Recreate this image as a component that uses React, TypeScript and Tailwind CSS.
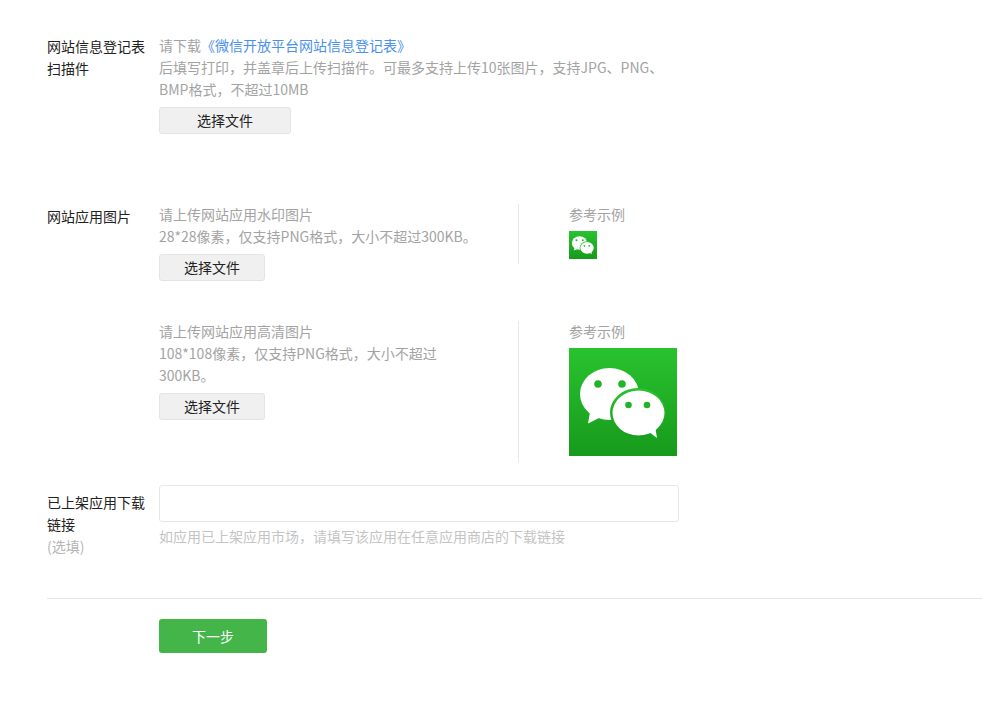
import React from 'react';

const FONT = "font-['Microsoft_YaHei','Noto_Sans_CJK_SC','Liberation_Sans',sans-serif]";

const WeChatIcon: React.FC<{ size: number; id: string }> = ({ size, id }) => (
  <svg width={size} height={size} viewBox="0 0 108 108" className="block">
    <defs>
      <linearGradient id={id} x1="0" y1="0" x2="0" y2="1">
        <stop offset="0" stopColor="#29c32f" />
        <stop offset="1" stopColor="#179a1c" />
      </linearGradient>
    </defs>
    <rect width="108" height="108" fill={`url(#${id})`} />
    <ellipse cx="40.5" cy="46" rx="29.5" ry="26" fill="#fff" />
    <path d="M21 64 L19 75.5 L34 68 Z" fill="#fff" />
    <ellipse cx="69" cy="64.5" rx="28" ry="24.5" fill={`url(#${id})`} />
    <ellipse cx="69.5" cy="65" rx="26" ry="22.5" fill="#fff" />
    <path d="M80 84 L88 90 L86 78 Z" fill="#fff" />
    <circle cx="29" cy="36" r="3.8" fill="#22b428" />
    <circle cx="53" cy="36" r="3.8" fill="#22b428" />
    <circle cx="59.5" cy="57" r="3.3" fill="#22b428" />
    <circle cx="78" cy="57" r="3.3" fill="#22b428" />
  </svg>
);

const FileButton: React.FC<{ wide?: boolean }> = ({ wide }) => (
  <button
    className={`${wide ? 'w-[132px]' : 'w-[106px]'} h-[27px] mt-[7px] block bg-[#f0f0f0] border border-[#e4e4e4] rounded-[3px] text-[14px] leading-[25px] text-[#222]`}
  >
    选择文件
  </button>
);

const ImageRow: React.FC<{ lines: string; iconSize: number; id: string; height: string }> = ({
  lines,
  iconSize,
  id,
  height,
}) => (
  <div className="flex">
    <div className="w-[359px]">
      <p className="w-[320px] -mt-px text-[#a3a3a3]">请上传网站应用{iconSize > 50 ? '高清' : '水印'}图片</p>
      <p className="w-[320px] text-[#a3a3a3]">{lines}</p>
      <FileButton />
    </div>
    <div className={`${height} border-l border-[#e7e7e7] pl-[50px]`}>
      <p className="-mt-px text-[#a3a3a3]">参考示例</p>
      <div className="mt-[6px]">
        <WeChatIcon size={iconSize} id={id} />
      </div>
    </div>
  </div>
);

export default function App() {
  return (
    <div className={`${FONT} w-[982px] h-[705px] overflow-hidden bg-white pl-[47px] pt-[35px] text-[14px] leading-[22px]`}>
      <div className="flex">
        <div className="w-[112px] shrink-0 pr-[12px] text-[#222]">网站信息登记表扫描件</div>
        <div className="w-[520px]">
          <p className="-mt-px text-[#a3a3a3]">
            请下载<a className="text-[#4a90ee]">《微信开放平台网站信息登记表》</a>
          </p>
          <p className="text-[#a3a3a3]">后填写打印，并盖章后上传扫描件。可最多支持上传10张图片，支持JPG、PNG、BMP格式，不超过10MB</p>
          <FileButton wide />
        </div>
      </div>

      <div className="flex mt-[70px]">
        <div className="w-[112px] shrink-0 text-[#222] pt-[1px]">网站应用图片</div>
        <div className="flex flex-col gap-[40px]">
          <ImageRow lines="28*28像素，仅支持PNG格式，大小不超过300KB。" iconSize={28} id="wx-small" height="h-[60px]" />
          <ImageRow lines="108*108像素，仅支持PNG格式，大小不超过300KB。" iconSize={108} id="wx-large" height="h-[141px]" />
        </div>
      </div>

      <div className="flex mt-[23px]">
        <div className="w-[112px] shrink-0 pr-[12px] pt-[6px] text-[#222]">
          已上架应用下载链接
          <div className="text-[#b5b5b5]">(选填)</div>
        </div>
        <div>
          <input className="block w-[520px] h-[37px] border border-[#e7e7e7] rounded-[3px] bg-white outline-none" />
          <p className="mt-[3px] text-[#c4c4c4]">如应用已上架应用市场，请填写该应用在任意应用商店的下载链接</p>
        </div>
      </div>

      <div className="mt-[41px] border-t border-[#e7e7e7] pt-[20px] pl-[112px]">
        <button className="w-[108px] h-[34px] bg-[#44b549] rounded-[3px] text-white text-[14px]">下一步</button>
      </div>
    </div>
  );
}
